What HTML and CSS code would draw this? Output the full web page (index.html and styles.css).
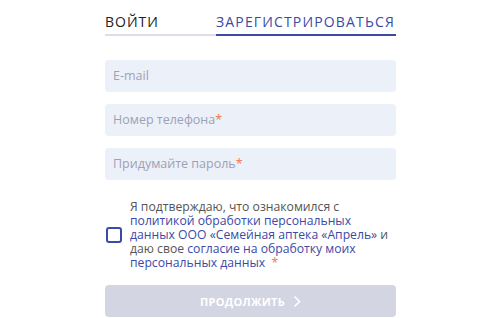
FILE: index.html
```html
<!DOCTYPE html>
<html lang="ru">
<head>
<meta charset="utf-8">
<link rel="stylesheet" href="styles.css">
</head>
<body>
<div class="form">
  <div class="tabs">
    <div class="tab tab-login">ВОЙТИ</div>
    <div class="tab tab-active">ЗАРЕГИСТРИРОВАТЬСЯ</div>
  </div>
  <div class="fields">
    <div class="field">E-mail</div>
    <div class="field">Номер телефона<span class="req">*</span></div>
    <div class="field">Придумайте пароль<span class="req">*</span></div>
  </div>
  <div class="agree">
    <span class="checkbox"></span>
    <p class="agree-text">Я подтверждаю, что ознакомился с<br><span class="link">политикой обработки персональных<br>данных ООО «Семейная аптека «Апрель»</span> и<br>даю свое <span class="link">согласие на обработку моих<br>персональных данных</span>&nbsp; <span class="req">*</span></p>
  </div>
  <button class="submit">ПРОДОЛЖИТЬ <svg class="chev" width="8" height="13" viewBox="0 0 8 13"><path d="M1.5 1.5 L6.5 6.5 L1.5 11.5" fill="none" stroke="#fff" stroke-width="1.6"/></svg></button>
</div>
</body>
</html>
```
FILE: styles.css
```css
html, body { margin: 0; padding: 0; background: #fff; }
body { font-family: "Open Sans", "Noto Sans", sans-serif; }
.form { width: 291px; margin-left: 105px; padding-top: 12px; }
.tabs { display: flex; }
.tab {
  font-size: 14px; letter-spacing: 1px; line-height: 20px;
  padding-bottom: 2px; white-space: nowrap;
}
.tab-login { flex: none; width: 111px; color: #222; border-bottom: 2px solid #dcdde6; }
.tab-active { flex: 1; color: #3b4aa6; border-bottom: 2px solid #3b4aa6; letter-spacing: 1.15px; }
.fields { display: flex; flex-direction: column; gap: 12px; margin-top: 24px; }
.field {
  height: 32px; line-height: 32px; padding: 0 8px; border-radius: 4px;
  background: #ecf0f9; color: #9ca2b6; font-size: 12.5px;
}
.req { color: #f07a4a; }
.agree { display: flex; align-items: center; gap: 8px; margin-top: 20px; }
.checkbox {
  flex: none; width: 12px; height: 12px; border: 2px solid #3b4aa6; border-radius: 3px;
  margin-left: 1px;
}
.agree-text { margin: 0; font-size: 12.2px; line-height: 14px; color: #555; white-space: nowrap; }
.link { color: #3b4aa6; }
.submit {
  display: flex; align-items: center; justify-content: center; gap: 8px;
  width: 100%; height: 32px; margin-top: 15px; border: 0; border-radius: 4px;
  background: #d4d5e2; color: #fff; font-family: inherit; font-weight: 700;
  font-size: 11px; letter-spacing: 0.3px; padding: 0;
}
.chev { display: block; }
```
